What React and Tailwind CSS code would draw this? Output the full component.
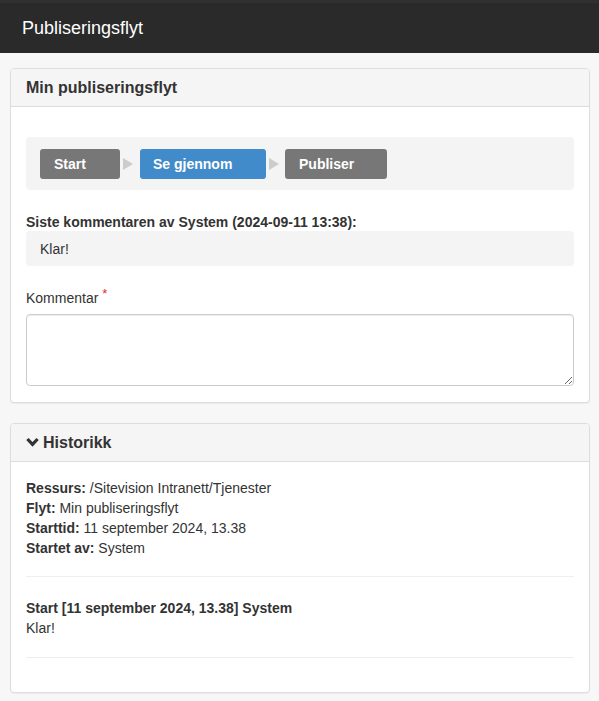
import React from "react";

function Arrow() {
  return (
    <svg width="10" height="12" viewBox="0 0 10 12" className="mx-[3px] shrink-0">
      <path d="M0 0 L10 6 L0 12 Z" fill="#cccccc" />
    </svg>
  );
}

export default function App() {
  return (
    <div className="min-h-screen bg-[#f7f7f7] text-[#333] text-[14px] leading-[20px]" style={{ fontFamily: '"Liberation Sans", Arial, sans-serif' }}>
      <header className="h-[53px] bg-[#2a2a2a] border-t-[3px] border-[#303030] flex items-center px-[22px]">
        <h1 className="text-white text-[18px] leading-none pb-[1px]">Publiseringsflyt</h1>
      </header>
      <main className="pl-[10px] pr-[9px] pt-[15px] pb-[9px] flex flex-col gap-[20px]">
        <section className="bg-white border border-[#ddd] rounded-[4px] shadow-[0_1px_1px_rgba(0,0,0,0.05)]">
          <div className="h-[38px] bg-[#f5f5f5] border-b border-[#ddd] rounded-t-[3px] px-[15px] flex items-center">
            <h2 className="text-[16px] font-bold">Min publiseringsflyt</h2>
          </div>
          <div className="px-[15px] pt-[30px] pb-[16px]">
            <div className="h-[53px] bg-[#f4f4f4] rounded-[4px] flex items-center px-[14px]">
              <div className="h-[30px] w-[80px] bg-[#777] rounded-[3px] text-white font-bold flex items-center px-[14px]">Start</div>
              <div className="w-[20px] flex justify-start"><Arrow /></div>
              <div className="h-[30px] w-[126px] bg-[#428bca] rounded-[3px] text-white font-bold flex items-center px-[13px]">Se gjennom</div>
              <div className="w-[19px] flex justify-start"><Arrow /></div>
              <div className="h-[30px] w-[102px] bg-[#777] rounded-[3px] text-white font-bold flex items-center px-[14px]">Publiser</div>
            </div>
            <div className="mt-[22px] font-bold">Siste kommentaren av System (2024-09-11 13:38):</div>
            <div className="mt-[-1px] h-[35px] bg-[#f4f4f4] rounded-[4px] flex items-center px-[14px]">Klar!</div>
            <div className="mt-[22px]">
              Kommentar <span className="text-[#d9302c] text-[13px] align-top relative -top-[4px]">*</span>
            </div>
            <textarea className="mt-[6px] block w-full h-[72px] border border-[#ccc] rounded-[4px] shadow-[inset_0_1px_1px_rgba(0,0,0,0.075)] outline-none resize-y p-[6px]" />
          </div>
        </section>
        <section className="bg-white border border-[#ddd] rounded-[4px] shadow-[0_1px_1px_rgba(0,0,0,0.05)]">
          <div className="h-[38px] bg-[#f5f5f5] border-b border-[#ddd] rounded-t-[3px] px-[15px] flex items-center gap-[4px]">
            <svg width="13" height="11" viewBox="0 0 13 11" className="shrink-0">
              <path d="M1.4 2 L6.5 7.4 L11.6 2" fill="none" stroke="#333" strokeWidth="3.2" />
            </svg>
            <h2 className="text-[16px] font-bold">Historikk</h2>
          </div>
          <div className="px-[15px] pt-[16px] pb-[14px]">
            <div><b>Ressurs:</b> /Sitevision Intranett/Tjenester</div>
            <div><b>Flyt:</b> Min publiseringsflyt</div>
            <div><b>Starttid:</b> 11 september 2024, 13.38</div>
            <div><b>Startet av:</b> System</div>
            <hr className="mt-[18px] mb-[21px] border-t border-[#eee]" />
            <div className="font-bold">Start [11 september 2024, 13.38] System</div>
            <div>Klar!</div>
            <hr className="mt-[19px] mb-[20px] border-t border-[#eee]" />
          </div>
        </section>
      </main>
    </div>
  );
}
